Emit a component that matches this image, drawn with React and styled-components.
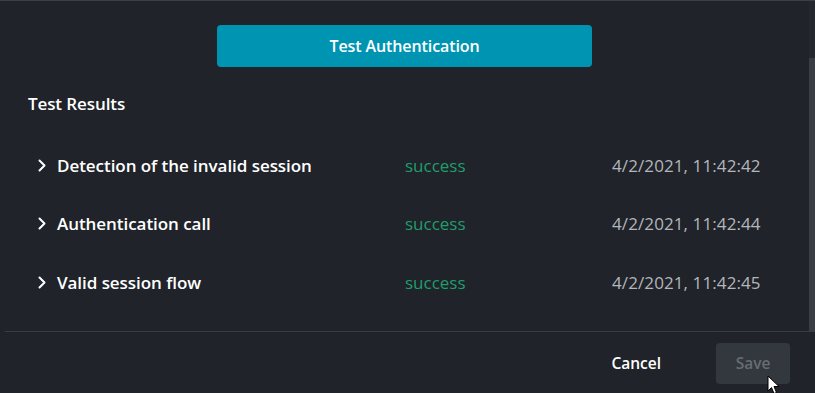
import React from 'react'
import styled, { createGlobalStyle } from 'styled-components'

const Global = createGlobalStyle`
  html, body {
    margin: 0;
    padding: 0;
    background: #202329;
  }
  body {
    font-family: "Open Sans", "Liberation Sans", sans-serif;
    color: #ffffff;
    overflow: hidden;
  }
`

const Dialog = styled.div`
  position: relative;
  width: 815px;
  height: 393px;
  display: flex;
  flex-direction: column;
  background: #202329;
  border-top: 1px solid #3b3f46;
  box-sizing: border-box;
`

const Body = styled.div`
  flex: 1;
  display: flex;
  min-height: 0;
`

const Content = styled.div`
  flex: 1;
  padding-top: 24px;
  display: flex;
  flex-direction: column;
`

const ScrollTrack = styled.div`
  width: 6px;
  background: #24272d;
  padding-top: 57px;
  box-sizing: border-box;
`

const ScrollThumb = styled.div`
  height: 100%;
  background: #3a3e44;
`

const PrimaryButton = styled.button`
  align-self: center;
  width: 375px;
  height: 42px;
  border: none;
  border-radius: 4px;
  background: #0094b3;
  color: #ffffff;
  font-family: inherit;
  font-size: 16px;
  font-weight: 600;
  letter-spacing: -0.1px;
  cursor: pointer;
`

const SectionTitle = styled.h3`
  margin: 27px 0 22px 28px;
  font-size: 17px;
  line-height: 20px;
  font-weight: 600;
  letter-spacing: -0.1px;
`

const Row = styled.div`
  display: grid;
  grid-template-columns: 21px 348px 207px auto;
  align-items: center;
  height: 58.5px;
  padding-left: 36px;
`

const Chevron = styled.svg`
  width: 12px;
  height: 13px;
`

const Label = styled.span`
  font-size: 17px;
  font-weight: 600;
  letter-spacing: -0.05px;
`

const Status = styled.span`
  font-size: 17px;
  color: #1f9e6c;
`

const Time = styled.span`
  font-size: 17px;
  color: #b3b6bb;
  letter-spacing: 0.1px;
`

const Footer = styled.div`
  height: 61px;
  border-top: 1px solid #383c43;
  margin-left: 5px;
  display: flex;
  align-items: center;
  justify-content: flex-end;
  padding-right: 25px;
  gap: 55px;
`

const TextButton = styled.button`
  background: none;
  border: none;
  padding: 0;
  color: #ffffff;
  font-family: inherit;
  font-size: 15.5px;
  font-weight: 600;
  cursor: pointer;
`

const SaveButton = styled.button`
  width: 74px;
  height: 41px;
  border: none;
  border-radius: 4px;
  background: #33373e;
  color: #686c73;
  font-family: inherit;
  font-size: 15.5px;
  font-weight: 600;
  margin-top: 1px;
`

const Cursor = styled.svg`
  position: absolute;
  left: 767px;
  top: 374px;
  width: 13px;
  height: 20px;
`

const results = [
  { name: 'Detection of the invalid session', status: 'success', time: '4/2/2021, 11:42:42' },
  { name: 'Authentication call', status: 'success', time: '4/2/2021, 11:42:44' },
  { name: 'Valid session flow', status: 'success', time: '4/2/2021, 11:42:45' },
]

const ChevronIcon = () => (
  <Chevron viewBox="0 0 12 13">
    <path d="M3.5 1.5 L8.5 6.5 L3.5 11.5" fill="none" stroke="#fff" strokeWidth="2" strokeLinecap="round" strokeLinejoin="round" />
  </Chevron>
)

export default function App() {
  return (
    <>
      <Global />
      <Dialog>
        <Body>
          <Content>
            <PrimaryButton>Test Authentication</PrimaryButton>
            <SectionTitle>Test Results</SectionTitle>
            {results.map(r => (
              <Row key={r.name}>
                <ChevronIcon />
                <Label>{r.name}</Label>
                <Status>{r.status}</Status>
                <Time>{r.time}</Time>
              </Row>
            ))}
          </Content>
          <ScrollTrack>
            <ScrollThumb />
          </ScrollTrack>
        </Body>
        <Footer>
          <TextButton>Cancel</TextButton>
          <SaveButton disabled>Save</SaveButton>
        </Footer>
        <Cursor viewBox="0 0 13 20">
          <path d="M1 1 L1 16 L4.5 12.5 L7 18.5 L9.5 17.5 L7 11.5 L12 11.5 Z" fill="#fff" stroke="#000" strokeWidth="1" strokeLinejoin="round" />
        </Cursor>
      </Dialog>
    </>
  )
}
